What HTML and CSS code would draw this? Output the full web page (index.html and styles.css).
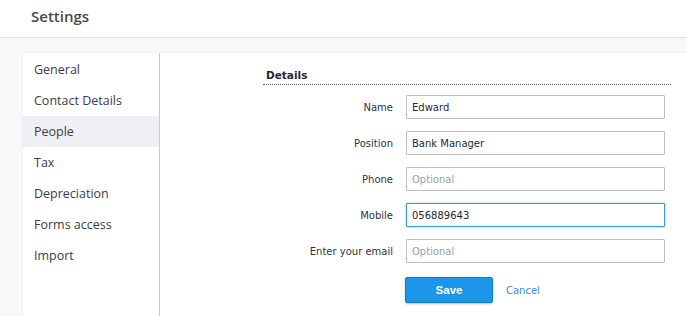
FILE: index.html
```html
<!DOCTYPE html>
<html>

<head>
    <meta charset="utf-8">
    <title>Settings</title>
    <link rel="stylesheet" href="styles.css">
</head>

<body>
    <header class="topbar">
        <h1 class="title">Settings</h1>
    </header>
    <main class="page">
        <div class="panel">
            <nav class="side">
                <a class="side_item">General</a>
                <a class="side_item">Contact Details</a>
                <a class="side_item active">People</a>
                <a class="side_item">Tax</a>
                <a class="side_item">Depreciation</a>
                <a class="side_item">Forms access</a>
                <a class="side_item">Import</a>
            </nav>
            <section class="content">
                <h3 class="section_head">Details</h3>
                <form class="form">
                    <label class="label">Name</label>
                    <input class="field" type="text" value="Edward">
                    <label class="label">Position</label>
                    <input class="field" type="text" value="Bank Manager">
                    <label class="label">Phone</label>
                    <input class="field" type="text" placeholder="Optional">
                    <label class="label">Mobile</label>
                    <input class="field focus" type="text" value="056889643">
                    <label class="label">Enter your email</label>
                    <input class="field" type="text" placeholder="Optional">
                    <div class="actions">
                        <button class="save" type="button">Save</button>
                        <a class="cancel">Cancel</a>
                    </div>
                </form>
            </section>
        </div>
    </main>
</body>

</html>
```

FILE: styles.css
```css
html {
    background-color: rgb(247, 248, 250);
}

body {
    margin: 0;
    height: 316px;
    overflow: hidden;
}

.topbar {
    height: 37px;
    background-color: #fff;
    border-bottom: 1px solid rgb(222, 224, 227);
}

.title {
    margin: 0;
    padding: 6px 0 0 31px;
    font-family: "Open Sans", sans-serif;
    font-size: 15px;
    font-weight: 600;
    line-height: 20px;
    color: rgb(72, 72, 72);
}

.page {
    padding: 15px 0 0 23px;
}

.panel {
    display: flex;
    height: 270px;
    background-color: #fff;
    box-shadow: 0 0 2px rgba(0, 0, 0, 0.08);
}

.side {
    display: flex;
    flex-direction: column;
    width: 136px;
    padding-top: 1px;
    border-right: 1px solid rgb(204, 204, 204);
}

.side_item {
    height: 31px;
    line-height: 31px;
    padding-left: 11px;
    font-family: "Open Sans", sans-serif;
    font-size: 12.5px;
    color: rgb(60, 60, 70);
}

.side_item.active {
    background-color: rgb(239, 240, 243);
}

.content {
    padding: 15px 0 0 103px;
}

.section_head {
    width: 408px;
    margin: 0 0 10px 0;
    padding: 0 0 2px 3px;
    font-family: "DejaVu Sans", Verdana, sans-serif;
    font-size: 10.5px;
    font-weight: bold;
    line-height: 14px;
    color: rgb(40, 40, 50);
    border-bottom: 1px dotted rgb(90, 90, 90);
    box-sizing: border-box;
}

.form {
    display: grid;
    grid-template-columns: 130px 259px;
    column-gap: 13px;
    row-gap: 12px;
    align-items: center;
    font-family: "DejaVu Sans", Verdana, sans-serif;
    font-size: 10px;
}

.label {
    text-align: right;
    color: rgb(50, 50, 60);
}

.field {
    height: 24px;
    margin: 0;
    padding: 0 5px;
    box-sizing: border-box;
    border: 1px solid rgb(190, 190, 190);
    border-radius: 1px;
    font-family: "DejaVu Sans", Verdana, sans-serif;
    font-size: 10px;
    color: rgb(40, 40, 50);
    outline: none;
}

.field::placeholder {
    color: rgb(160, 160, 160);
}

.field.focus {
    border-color: rgb(60, 150, 230);
    box-shadow: 0 0 2px rgba(60, 150, 230, 0.6);
}

.actions {
    grid-column: 2;
    display: flex;
    align-items: center;
    gap: 13px;
    margin-top: 2px;
    margin-left: -1px;
}

.save {
    width: 88px;
    height: 26px;
    background-color: rgb(27, 150, 232);
    border: 1px solid rgb(20, 125, 200);
    border-radius: 2px;
    box-shadow: 0 1px 2px rgba(0, 0, 0, 0.25);
    font-family: "Liberation Sans", Arial, sans-serif;
    font-size: 11.5px;
    font-weight: bold;
    color: #fff;
}

.cancel {
    font-family: "DejaVu Sans", Verdana, sans-serif;
    font-size: 10px;
    color: rgb(60, 140, 230);
}
```
